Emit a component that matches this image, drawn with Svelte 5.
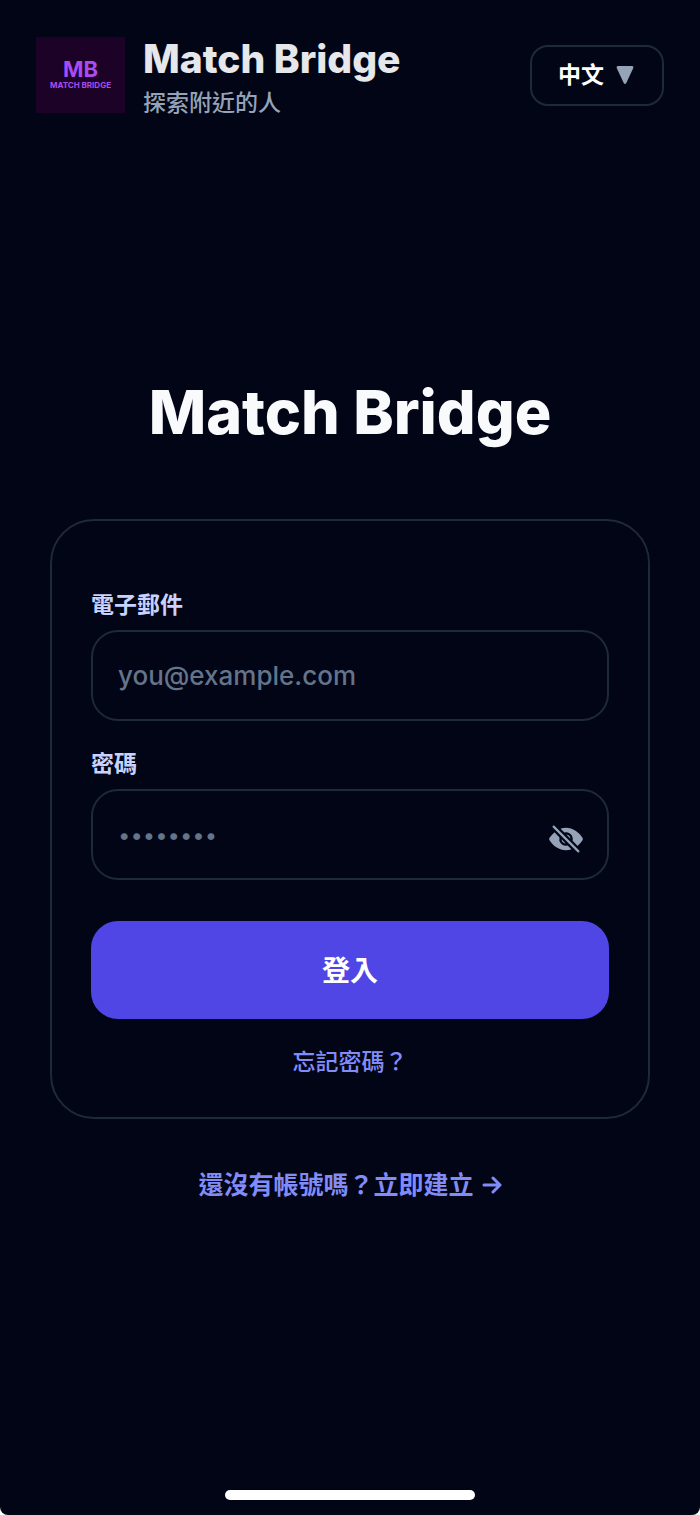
<script>
  let email = $state('');
  let password = $state('');
  let showPassword = $state(false);
  let language = $state('zh');
</script>

<div class="screen">
  <header class="topbar">
    <div class="logo">
      <span class="logo-mark">MB</span>
      <span class="logo-name">MATCH BRIDGE</span>
    </div>
    <div class="brand">
      <span class="brand-name">Match Bridge</span>
      <span class="brand-tagline">探索附近的人</span>
    </div>
    <div class="language">
      <select aria-label="語言" bind:value={language}>
        <option value="zh">中文</option>
        <option value="en">EN</option>
      </select>
      <svg viewBox="0 0 18 20" aria-hidden="true">
        <path d="M2 1h14q2 0 1.300 2L10.300 18q-1.300 2-2.600 0L.7 3Q0 1 2 1z" />
      </svg>
    </div>
  </header>

  <main>
    <h1>Match Bridge</h1>

    <form class="card" onsubmit={(e) => e.preventDefault()}>
      <label for="email">電子郵件</label>
      <div class="field">
        <input id="email" type="email" placeholder="you@example.com" bind:value={email} />
      </div>

      <label for="password">密碼</label>
      <div class="field">
        <input
          id="password"
          class="secret"
          type={showPassword ? 'text' : 'password'}
          placeholder="••••••••"
          bind:value={password}
        />
        <button
          class="toggle"
          type="button"
          aria-label="顯示密碼"
          onclick={() => (showPassword = !showPassword)}
        >
          <svg viewBox="0 0 512 512" aria-hidden="true">
            <path d="M432 448a15.920 15.920 0 01-11.310-4.690l-352-352a16 16 0 0122.620-22.620l352 352A16 16 0 01432 448zM248 315.850l-51.790-51.790a2 2 0 00-3.390 1.690 64.110 64.110 0 0053.490 53.480 2 2 0 001.690-3.380zM264 196.150L315.870 248a2 2 0 003.400-1.690 64.130 64.130 0 00-53.550-53.550 2 2 0 00-1.720 3.390z" />
            <path d="M491 273.360a32.200 32.200 0 00-.1-34.760c-26.460-40.920-60.790-75.680-99.270-100.530C349 110.550 302 96 255.680 96a226.540 226.540 0 00-71.820 11.790 4 4 0 00-1.560 6.630l47.240 47.240a4 4 0 003.820 1.050 96 96 0 01116 116 4 4 0 001.050 3.810l67.950 68a4 4 0 005.400.24 343.810 343.810 0 0067.240-77.400zM256 352a96 96 0 01-93.300-118.630 4 4 0 00-1.050-3.810l-66.840-66.870a4 4 0 00-5.410-.23c-24.390 20.810-47 46.130-67.670 75.720a31.920 31.920 0 00-.64 35.540c26.410 41.330 60.390 76.140 98.280 100.650C162.060 402 207.900 416 255.680 416a238.220 238.220 0 0072.640-11.550 4 4 0 001.610-6.640l-47.470-47.460a4 4 0 00-3.810-1.050A96 96 0 01256 352z" />
          </svg>
        </button>
      </div>

      <button class="submit" type="submit">登入</button>
      <a class="forgot" href="#forgot">忘記密碼？</a>
    </form>

    <a class="signup" href="#signup">
      還沒有帳號嗎？立即建立
      <svg viewBox="0 0 20 20" aria-hidden="true">
        <path d="M2 10h16M11 3l7 7-7 7" />
      </svg>
    </a>
  </main>

  <div class="home-indicator"></div>
</div>

<style>
  :global(body) {
    background: #fff;
  }

  .screen {
    box-sizing: border-box;
    min-height: 100vh;
    display: flex;
    flex-direction: column;
    padding: 31px 36px 15px;
    border-radius: 0 0 8px 8px;
    background: #020515;
    color: #f8fafc;
    font-family: Inter, 'Noto Sans CJK TC', sans-serif;
  }

  .topbar {
    display: flex;
    align-items: center;
    gap: 18px;
  }

  .logo {
    box-sizing: border-box;
    width: 89px;
    height: 76px;
    display: flex;
    flex-direction: column;
    align-items: center;
    justify-content: center;
    padding-bottom: 2px;
    background: #1b0226;
    color: #a94bf5;
  }

  .logo-mark {
    font-size: 22px;
    font-weight: 700;
    line-height: 22px;
  }

  .logo-name {
    font-size: 8px;
    font-weight: 700;
    line-height: 10px;
    white-space: nowrap;
  }

  .brand {
    flex: 1;
    display: flex;
    flex-direction: column;
  }

  .brand-name {
    color: #e5e7eb;
    font-size: 39px;
    font-weight: 800;
    line-height: 56px;
    white-space: nowrap;
  }

  .brand-tagline {
    color: #94a3b8;
    font-size: 23px;
    font-weight: 500;
    line-height: 32px;
  }

  .language {
    position: relative;
  }

  .language select {
    display: block;
    appearance: none;
    box-sizing: border-box;
    width: 134px;
    height: 61px;
    padding: 0 50px 0 26px;
    border: 2px solid #1e293b;
    border-radius: 18px;
    background: transparent;
    color: #fff;
    font: inherit;
    font-size: 23px;
    font-weight: 700;
  }

  .language svg {
    position: absolute;
    top: 20px;
    right: 30px;
    width: 18px;
    height: 20px;
    fill: #94a3b8;
    pointer-events: none;
  }

  main {
    display: flex;
    flex-direction: column;
    padding: 253px 14px 40px;
  }

  h1 {
    margin: 0 0 67px;
    font-size: 61px;
    font-weight: 800;
    line-height: 80px;
    text-align: center;
  }

  .card {
    display: flex;
    flex-direction: column;
    padding: 68px 39px 39px;
    border: 2px solid #1e293b;
    border-radius: 44px;
  }

  label {
    margin-bottom: 9px;
    color: #c7d2fe;
    font-size: 23px;
    font-weight: 700;
    line-height: 32px;
  }

  .field {
    display: flex;
    align-items: center;
    box-sizing: border-box;
    height: 91px;
    margin-bottom: 27px;
    padding: 0 23px 0 25px;
    border: 2px solid #1e293b;
    border-radius: 27px;
  }

  input {
    flex: 1;
    min-width: 0;
    padding: 0;
    border: 0;
    outline: 0;
    background: transparent;
    color: #f8fafc;
    font: inherit;
    font-size: 26px;
    font-weight: 500;
  }

  input::placeholder {
    color: #64748b;
    opacity: 1;
  }

  .secret {
    font-size: 22px;
    font-weight: 400;
  }

  .toggle {
    display: flex;
    padding: 8px 0 0;
    border: 0;
    background: none;
    cursor: pointer;
  }

  .toggle svg {
    width: 36px;
    height: 36px;
    fill: #94a3b8;
  }

  .submit {
    height: 98px;
    margin-top: 14px;
    padding: 0 0 2px;
    border: 0;
    border-radius: 27px;
    background: #4f46e5;
    color: #fff;
    font: inherit;
    font-size: 28px;
    font-weight: 700;
    cursor: pointer;
  }

  .forgot {
    align-self: center;
    margin-top: 27px;
    color: #818cf8;
    font-size: 23px;
    font-weight: 500;
    line-height: 32px;
    text-decoration: none;
  }

  .signup {
    display: flex;
    align-items: center;
    justify-content: center;
    gap: 8px;
    margin-top: 48px;
    color: #818cf8;
    font-size: 25px;
    font-weight: 600;
    line-height: 36px;
    text-decoration: none;
  }

  .signup svg {
    width: 20px;
    height: 20px;
    fill: none;
    stroke: #818cf8;
    stroke-width: 3;
    stroke-linecap: round;
    stroke-linejoin: round;
  }

  .home-indicator {
    align-self: center;
    width: 250px;
    height: 10px;
    margin-top: auto;
    border-radius: 5px;
    background: #fff;
  }
</style>
